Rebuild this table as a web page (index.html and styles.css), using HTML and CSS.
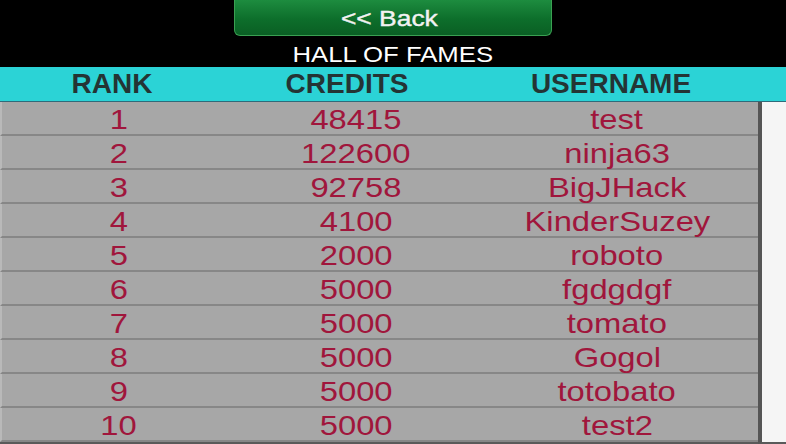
FILE: index.html
```html
<!DOCTYPE html>
<html lang="en">
<head>
  <meta charset="UTF-8" />
  <title>Hall of Fames</title>
  <link rel="stylesheet" href="styles.css">
</head>
<body>
  <header class="top">
    <button class="back-btn"><span>&lt;&lt; Back</span></button>
    <h1 class="title"><span>HALL OF FAMES</span></h1>
  </header>

  <div class="board-head">
    <span>RANK</span>
    <span>CREDITS</span>
    <span>USERNAME</span>
  </div>

  <div class="board">
    <div class="rows" id="rows"></div>
    <div class="scroll"></div>
  </div>

  <script>
    const scores = [
      [1, 48415, 'test'],
      [2, 122600, 'ninja63'],
      [3, 92758, 'BigJHack'],
      [4, 4100, 'KinderSuzey'],
      [5, 2000, 'roboto'],
      [6, 5000, 'fgdgdgf'],
      [7, 5000, 'tomato'],
      [8, 5000, 'Gogol'],
      [9, 5000, 'totobato'],
      [10, 5000, 'test2'],
    ];

    const rows = document.getElementById('rows');
    scores.forEach(s => {
      const div = document.createElement('div');
      div.className = 'row';
      div.innerHTML = `<div><span>${s[0]}</span></div><div><span>${s[1]}</span></div><div><span>${s[2]}</span></div>`;
      rows.appendChild(div);
    });
  </script>
</body>
</html>
```

FILE: styles.css
```css
* {
  box-sizing: border-box;
  margin: 0;
  padding: 0;
  font-family: "Liberation Sans", Arial, sans-serif;
}

body {
  background-color: #000;
  width: 786px;
  height: 444px;
  overflow: hidden;
}

.top {
  height: 67px;
  display: flex;
  flex-direction: column;
  align-items: center;
}

/* the game UI is stretched sideways, so the text is too */
.back-btn span,
.title span,
.row span {
  display: inline-block;
  transform: scaleX(1.17);
}

.back-btn {
  width: 318px;
  height: 36px;
  border: 1px solid #3aa052;
  border-top: none;
  border-radius: 0 0 6px 6px;
  background: linear-gradient(#1d8c3f, #0d6e2b 55%, #0a5f24);
  color: #f2f2f2;
  font-family: "DejaVu Sans", sans-serif;
  font-size: 22px;
  line-height: 34px;
  padding-top: 2px;
  cursor: pointer;
}

.back-btn span {
  transform: scaleX(1.2);
  margin-right: 8px;
  -webkit-text-stroke: 0.4px #f2f2f2;
}

.title {
  color: #fff;
  font-size: 22px;
  font-weight: normal;
  line-height: 31px;
  padding-top: 3px;
}

.board-head {
  height: 35px;
  background-color: #2bd3d6;
  border-bottom: 1px solid #2f6b7a;
  display: grid;
  grid-template-columns: 224px 246px 282px 1fr;
  align-items: center;
  color: #243434;
  font-size: 28px;
  font-weight: bold;
  text-align: center;
}

.board {
  display: flex;
  height: 342px;
}

.rows {
  width: 758px;
  border-bottom: 2px solid #5a5a5a;
}

.row {
  height: 34px;
  display: grid;
  grid-template-columns: 234px 240px 1fr;
  align-items: center;
  padding-top: 2px;
  background-color: #a7a7a7;
  border-left: 2px solid #b9b9b9;
  border-bottom: 2px solid #878787;
  color: #a0163c;
  font-size: 28px;
  text-align: center;
}

.scroll {
  width: 28px;
  background-color: #f5f5f5;
  border-left: 4px solid #555;
  border-bottom: 2px solid #5a5a5a;
}
```
